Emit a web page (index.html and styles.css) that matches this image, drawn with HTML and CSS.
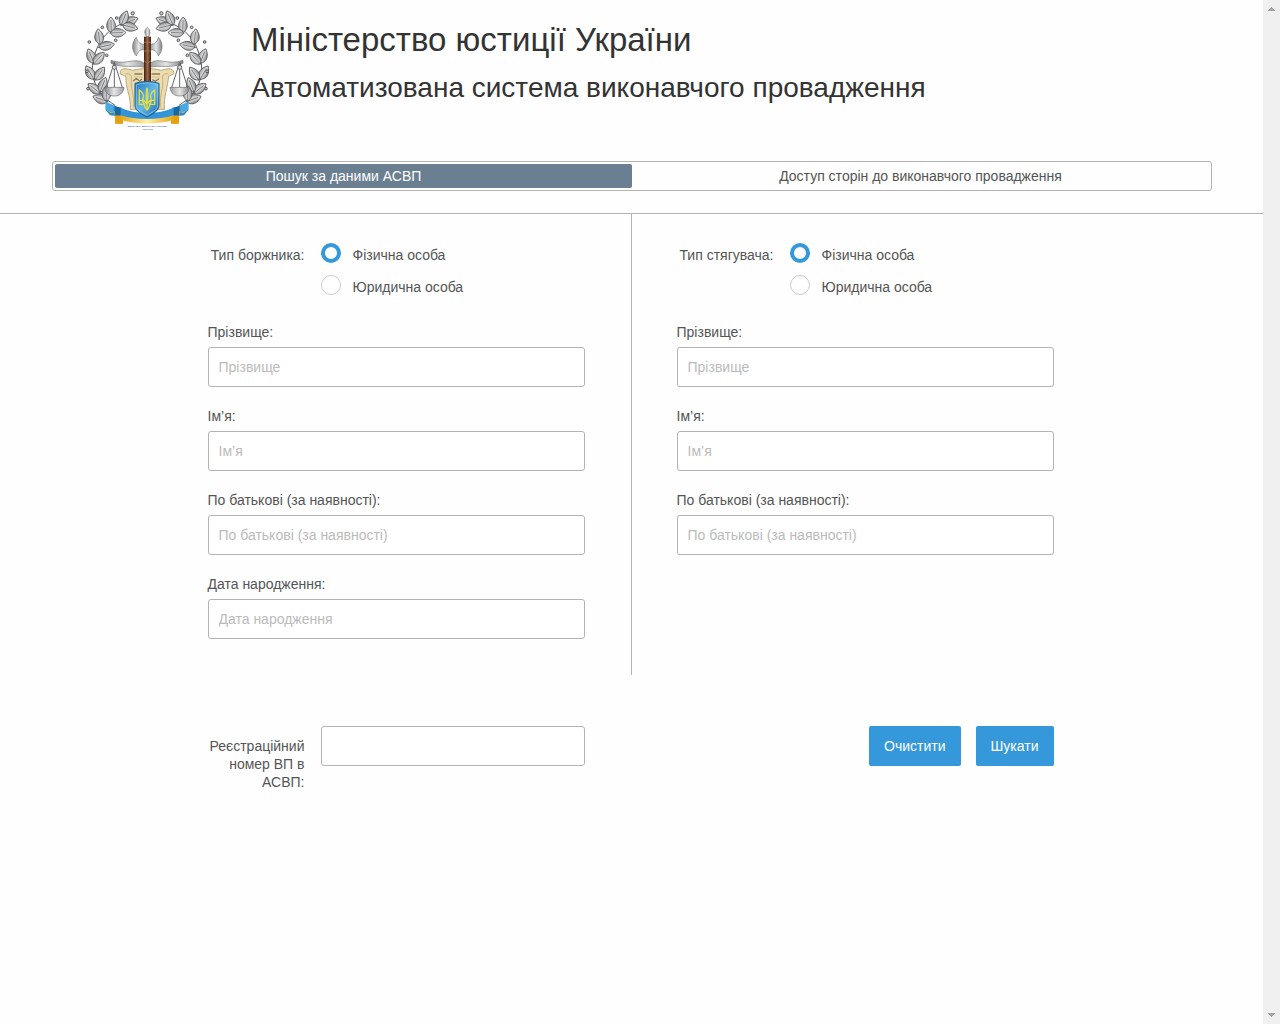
FILE: index.html
```
<!DOCTYPE html>
<html lang="uk">
<head>
    <meta charset="UTF-8">
    <meta name="viewport" content="width=device-width, initial-scale=1.0">
    <title>Автоматизована система виконавчого провадження</title>
    <link rel="stylesheet" href="styles.css">
</head>
<body>
    <main class="page">
        <header class="header">
            <svg class="emblem" viewBox="27 30 378 360" aria-hidden="true">
                <defs>
                    <linearGradient id="silver" x1="0" x2="1">
                        <stop offset="0" stop-color="#808285"/>
                        <stop offset="0.5" stop-color="#e6e6e6"/>
                        <stop offset="1" stop-color="#9c9ea1"/>
                    </linearGradient>
                    <linearGradient id="wood" x1="0" x2="1">
                        <stop offset="0" stop-color="#3d2010"/>
                        <stop offset="0.5" stop-color="#9b6746"/>
                        <stop offset="1" stop-color="#3d2010"/>
                    </linearGradient>
                    <linearGradient id="sky" x1="0" y1="0" x2="1" y2="1">
                        <stop offset="0" stop-color="#2377bd"/>
                        <stop offset="0.5" stop-color="#62b8ed"/>
                        <stop offset="1" stop-color="#1c68ae"/>
                    </linearGradient>
                    <linearGradient id="gold" x1="0" x2="1">
                        <stop offset="0" stop-color="#e9a516"/>
                        <stop offset="0.5" stop-color="#fff0a8"/>
                        <stop offset="1" stop-color="#e9a516"/>
                    </linearGradient>
                    <g id="leaf">
                        <path d="M0 0C-18-11-17-30 0-47C17-30 18-11 0 0Z" fill="url(#silver)" stroke="#55575a" stroke-width="2.5"/>
                        <path d="M0 3V-38" stroke="#4c4e51" stroke-width="2"/>
                    </g>
                    <g id="half">
                        <path d="M120 316C60 278 43 225 56 177C68 119 106 76 170 62" fill="none" stroke="#55575a" stroke-width="3"/>
                        <use href="#leaf" transform="translate(145 72) rotate(68)"/>
                        <use href="#leaf" transform="translate(138 76) rotate(23)"/>
                        <use href="#leaf" transform="translate(143 75) rotate(104)"/>
                        <use href="#leaf" transform="translate(109 98) rotate(-2)"/>
                        <use href="#leaf" transform="translate(106 99) rotate(88)"/>
                        <use href="#leaf" transform="translate(75 133) rotate(-7)"/>
                        <use href="#leaf" transform="translate(72 142) rotate(78)"/>
                        <use href="#leaf" transform="translate(57 190) rotate(-22)"/>
                        <use href="#leaf" transform="translate(56 192) rotate(42)"/>
                        <use href="#leaf" transform="translate(57 238) rotate(-31)"/>
                        <use href="#leaf" transform="translate(61 240) rotate(35)"/>
                        <use href="#leaf" transform="translate(76 280) rotate(-52)"/>
                        <use href="#leaf" transform="translate(75 276) rotate(22)"/>
                        <use href="#leaf" transform="translate(98 305) rotate(-70)"/>
                        <use href="#leaf" transform="translate(94 303) rotate(0)"/>
                        <g fill="#c8c8c8" stroke="#55575a" stroke-width="3">
                            <circle cx="173" cy="40" r="5"/>
                            <circle cx="125" cy="54" r="4"/>
                            <circle cx="82" cy="82" r="4"/>
                            <circle cx="122" cy="121" r="4"/>
                            <circle cx="43" cy="126" r="4"/>
                            <circle cx="95" cy="166" r="4"/>
                            <circle cx="36" cy="214" r="4"/>
                            <circle cx="39" cy="266" r="4"/>
                        </g>
                    </g>
                    <g id="scale">
                        <path d="M208 190C178 169 157 198 108 181V190C147 207 176 194 208 202Z" fill="url(#silver)" stroke="#737578" stroke-width="2"/>
                        <path d="M118 186L94 263M118 186V263M118 186L142 263" fill="none" stroke="#66686b" stroke-width="3"/>
                        <circle cx="118" cy="202" r="6" fill="#ddd" stroke="#66686b" stroke-width="3"/>
                        <path d="M88 262H147C145 280 133 288 118 288S91 280 88 262Z" fill="url(#silver)" stroke="#66686b" stroke-width="2"/>
                    </g>
                    <g id="blade">
                        <path d="M209 132C194 135 187 124 184 112C169 128 169 151 184 168C188 154 196 147 209 150Z" fill="url(#silver)" stroke="#77797c" stroke-width="2"/>
                    </g>
                    <g id="ribbon">
                        <path d="M140 326L92 306V330L105 346L140 350Z" fill="#2a8bcf"/>
                        <path d="M92 328L108 340L118 337L121 371H142V340" fill="#f8b11c"/>
                        <path d="M92 306L116 317V340L92 329Z" fill="#49a9e4"/>
                        <path d="M119 319L140 323V347H120Z" fill="#1967a5"/>
                        <path d="M121 347H144V371H121Z" fill="#e69e13"/>
                    </g>
                </defs>

                <use href="#half"/>
                <use href="#half" transform="translate(432 0) scale(-1 1)"/>

                <!-- scroll behind the shield -->
                <path d="M136 222C133 203 151 204 173 211C201 204 229 204 259 211C283 203 298 205 296 222L281 229C277 266 266 290 268 328H166C169 286 150 264 153 229Z" fill="#eadbb0" stroke="#bca875" stroke-width="3"/>
                <path d="M151 222C163 219 170 224 169 234C166 267 178 278 176 322M281 222C269 219 262 224 263 234C266 267 254 278 256 322" fill="none" stroke="#c9b27c" stroke-width="3"/>
                <path d="M178 222H202M230 222H255M174 243L184 236L194 243L201 237M232 239L241 244L252 236" fill="none" stroke="#8b7b5c" stroke-width="4"/>
                <path d="M177 231H203M230 231H255M182 251H201M231 251H251" stroke="#c4b28b" stroke-width="2"/>

                <use href="#scale"/>
                <use href="#scale" transform="translate(432 0) scale(-1 1)"/>
                <use href="#blade"/>
                <use href="#blade" transform="translate(434 0) scale(-1 1)"/>

                <path d="M217 82C206 91 209 101 214 110H221C225 101 228 91 217 82Z" fill="url(#silver)" stroke="#77797c" stroke-width="2"/>
                <path d="M207 110H228V249H207Z" fill="url(#wood)"/>
                <path d="M206 127H229M206 153H229M206 181L217 190L229 181" fill="none" stroke="#b98757" stroke-width="2"/>

                <use href="#ribbon"/>
                <use href="#ribbon" transform="translate(432 0) scale(-1 1)"/>
                <path d="M137 323C181 344 250 344 296 323V348C249 365 183 365 137 348Z" fill="#3195d8"/>
                <path d="M137 346C182 361 250 361 296 346V359C249 374 183 374 137 359Z" fill="url(#gold)"/>

                <path d="M180 250Q216 239 252 250V316C252 334 230 343 216 351C202 343 180 334 180 316Z" fill="url(#sky)" stroke="#215982" stroke-width="3"/>
                <path d="M184 254Q216 244 248 254V315C248 331 228 338 216 346C204 338 184 331 184 315Z" fill="none" stroke="#94d1ef" stroke-width="2"/>
                <!-- trident -->
                <path d="M193 270V313H208C209 322 212 326 216 330C220 326 223 322 224 313H239V270C226 279 225 290 229 299C224 302 220 307 216 313C212 307 208 302 203 299C207 290 206 279 193 270ZM216 263C211 279 213 291 216 312C219 291 221 279 216 263M193 301H202L208 313M239 301H230L224 313M216 312V330" fill="none" stroke="#e8dc3e" stroke-width="4"/>

                <g class="emblem-text" text-anchor="middle">
                    <text x="218" y="381">ДЕРЖАВНА ВИКОНАВЧА СЛУЖБА</text>
                    <text x="218" y="389">УКРАЇНИ</text>
                </g>
            </svg>
            <div class="titles">
                <h1>Міністерство юстиції України</h1>
                <h2>Автоматизована система виконавчого провадження</h2>
            </div>
        </header>

        <nav class="tabs">
            <button class="tab active" type="button">Пошук за даними АСВП</button>
            <button class="tab" type="button">Доступ сторін до виконавчого провадження</button>
        </nav>

        <form>
            <div class="columns parties">
                <section class="column left">
                    <div class="fields">
                        <div class="type" role="radiogroup" aria-labelledby="debtorType">
                            <span class="side-label" id="debtorType">Тип боржника:</span>
                            <div class="options">
                                <label class="option"><input type="radio" name="debtor" checked>Фізична особа</label>
                                <label class="option"><input type="radio" name="debtor">Юридична особа</label>
                            </div>
                        </div>
                        <div class="field">
                            <label for="debtorLast">Прізвище:</label>
                            <input class="text" id="debtorLast" type="text" placeholder="Прізвище">
                        </div>
                        <div class="field">
                            <label for="debtorFirst">Ім’я:</label>
                            <input class="text" id="debtorFirst" type="text" placeholder="Ім’я">
                        </div>
                        <div class="field">
                            <label for="debtorMiddle">По батькові (за наявності):</label>
                            <input class="text" id="debtorMiddle" type="text" placeholder="По батькові (за наявності)">
                        </div>
                        <div class="field">
                            <label for="debtorBirth">Дата народження:</label>
                            <input class="text" id="debtorBirth" type="text" placeholder="Дата народження">
                        </div>
                    </div>
                </section>

                <section class="column right">
                    <div class="fields">
                        <div class="type" role="radiogroup" aria-labelledby="creditorType">
                            <span class="side-label" id="creditorType">Тип стягувача:</span>
                            <div class="options">
                                <label class="option"><input type="radio" name="creditor" checked>Фізична особа</label>
                                <label class="option"><input type="radio" name="creditor">Юридична особа</label>
                            </div>
                        </div>
                        <div class="field">
                            <label for="creditorLast">Прізвище:</label>
                            <input class="text" id="creditorLast" type="text" placeholder="Прізвище">
                        </div>
                        <div class="field">
                            <label for="creditorFirst">Ім’я:</label>
                            <input class="text" id="creditorFirst" type="text" placeholder="Ім’я">
                        </div>
                        <div class="field">
                            <label for="creditorMiddle">По батькові (за наявності):</label>
                            <input class="text" id="creditorMiddle" type="text" placeholder="По батькові (за наявності)">
                        </div>
                    </div>
                </section>
            </div>

            <div class="columns bottom">
                <div class="column left">
                    <div class="fields number">
                        <label class="side-label" for="regNumber">Реєстраційний номер ВП в АСВП:</label>
                        <input class="text" id="regNumber" type="text">
                    </div>
                </div>
                <div class="column right">
                    <div class="fields buttons">
                        <button class="button" type="reset">Очистити</button>
                        <button class="button" type="button">Шукати</button>
                    </div>
                </div>
            </div>
        </form>
    </main>

    <div class="scrollbar" aria-hidden="true">
        <svg viewBox="0 0 7 4"><path d="M3 0h1v1h1v1h1v1h1v1H0V3h1V2h1V1h1z"/></svg>
        <svg viewBox="0 0 7 4"><path d="M0 0h7v1H6v1H5v1H4v1H3V3H2V2H1V1H0z"/></svg>
    </div>
</body>
</html>
```

FILE: styles.css
```
* {
    box-sizing: border-box;
}
body {
    margin: 0;
    min-height: 100vh;
    display: flex;
    background-color: #fefefe;
    color: #555;
    font-family: "Liberation Sans", Arial, sans-serif;
    font-size: 14px;
    line-height: 18px;
}
input, button {
    font: inherit;
    margin: 0;
}
.page {
    flex: 1;
    min-width: 0;
}

/* header */
.header {
    display: flex;
    gap: 41px;
    padding: 10px 84px 31px;
}
.emblem {
    width: 126px;
    height: 120px;
    flex: none;
}
.emblem-text {
    fill: #3f62a4;
    font-size: 7px;
    font-weight: bold;
}
.titles {
    padding-top: 8px;
}
h1, h2 {
    margin: 0;
    color: #333;
    font-weight: normal;
}
h1 {
    font-size: 33px;
    line-height: 44px;
}
h2 {
    margin-top: 6px;
    font-size: 28px;
    line-height: 40px;
}

/* tabs */
.tabs {
    display: flex;
    margin: 0 51px 22px 52px;
    padding: 2px;
    border: 1px solid #b3b3b3;
    border-radius: 3px;
}
.tab {
    flex: 1;
    height: 24px;
    padding: 0;
    border: 0;
    border-radius: 2px;
    background: none;
    color: #555;
}
.tab.active {
    background-color: #6b7f93;
    color: #fff;
}

/* form */
.columns {
    display: grid;
    grid-template-columns: 1fr 1fr;
}
.parties {
    border-top: 1px solid #b3b3b3;
}
.column {
    display: flex;
    padding: 0 46px 0 45px;
}
.parties .column {
    padding-top: 29px;
    padding-bottom: 36px;
}
.left {
    justify-content: flex-end;
    border-right: 1px solid transparent;
}
.parties .left {
    border-right-color: #b3b3b3;
}
.fields {
    width: 100%;
    max-width: 377px;
}
.type {
    display: flex;
    gap: 16px;
    margin-bottom: 24px;
    line-height: 24px;
}
.side-label {
    width: 97px;
    flex: none;
    text-align: right;
}
.options {
    display: flex;
    flex-direction: column;
    gap: 8px;
}
.option {
    display: flex;
    gap: 12px;
}
.option input {
    appearance: none;
    width: 20px;
    height: 20px;
    border: 1px solid #ccc;
    border-radius: 50%;
    background-color: #fff;
}
.option input:checked {
    border: 4px solid #3498db;
}
.field {
    display: flex;
    flex-direction: column;
    gap: 6px;
}
.field + .field {
    margin-top: 20px;
}
.text {
    width: 100%;
    height: 40px;
    padding: 0 10px;
    border: 1px solid #b3b3b3;
    border-radius: 3px;
    background-color: #fff;
    color: #555;
}
.text::placeholder {
    color: #bbb;
}

/* bottom row */
.bottom {
    padding-top: 51px;
}
.number {
    display: flex;
    gap: 16px;
}
.number .side-label {
    padding-top: 11px;
}
.buttons {
    display: flex;
    justify-content: flex-end;
    align-items: flex-start;
    gap: 15px;
}
.button {
    height: 40px;
    padding: 0 15px;
    border: 0;
    border-radius: 2px;
    background-color: #3498db;
    color: #fff;
}

.scrollbar {
    display: flex;
    flex-direction: column;
    justify-content: space-between;
    align-items: center;
    width: 17px;
    padding: 7px 0;
    background-color: #f0f0f0;
    fill: #a3a3a3;
}
.scrollbar svg {
    width: 7px;
    height: 4px;
}
```
